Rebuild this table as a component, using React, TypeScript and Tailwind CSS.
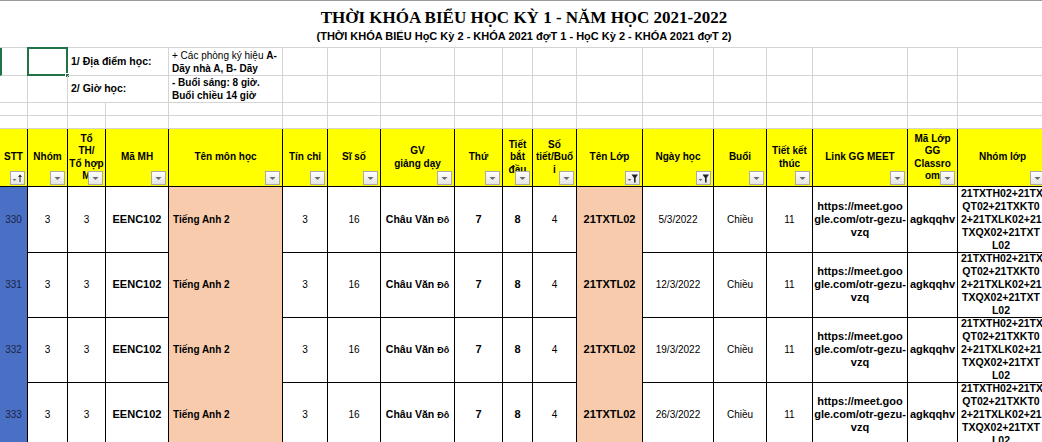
import React from "react"

const COLS =
  "grid grid-cols-[28px_40px_38px_63px_114px_45px_53px_74px_48px_30px_44px_66px_71px_53px_46px_95px_50px_90px]"

type BtnKind = "drop" | "sort" | "funnel"

function FilterBtn({ kind }: { kind: BtnKind }) {
  return (
    <div className="absolute right-[2px] bottom-[1px] w-[15px] h-[14px] border border-[#a9a9a9] bg-gradient-to-b from-white to-[#e4e4e4]">
      <svg width="13" height="12" viewBox="0 0 13 12" className="block">
        {kind === "drop" && <polygon points="3.5,5 9.5,5 6.5,8" fill="#6b6b6b" />}
        {kind === "sort" && (
          <>
            <polygon points="1.5,7 5.5,7 3.5,9" fill="#6b6b6b" />
            <line x1="9" y1="3" x2="9" y2="10" stroke="#333" strokeWidth="1" />
            <polygon points="7,5 11,5 9,2.5" fill="#333" />
          </>
        )}
        {kind === "funnel" && (
          <>
            <polygon points="1.5,7 5.5,7 3.5,9" fill="#6b6b6b" />
            <polygon points="5.5,2.5 12,2.5 9.6,6 9.6,10.5 8,10.5 8,6" fill="#222" />
          </>
        )}
      </svg>
    </div>
  )
}

const headers: { lines: string[]; btn: BtnKind }[] = [
  { lines: ["STT"], btn: "sort" },
  { lines: ["Nhóm"], btn: "drop" },
  { lines: ["Tổ", "TH/", "Tổ hợp", "M"], btn: "drop" },
  { lines: ["Mã MH"], btn: "drop" },
  { lines: ["Tên môn học"], btn: "drop" },
  { lines: ["Tín chỉ"], btn: "drop" },
  { lines: ["Sĩ số"], btn: "drop" },
  { lines: ["GV", "giảng dạy"], btn: "drop" },
  { lines: ["Thứ"], btn: "drop" },
  { lines: ["Tiết", "bắt", "đầu"], btn: "drop" },
  { lines: ["Số", "tiết/Buổ", "i"], btn: "drop" },
  { lines: ["Tên Lớp"], btn: "funnel" },
  { lines: ["Ngày học"], btn: "funnel" },
  { lines: ["Buổi"], btn: "drop" },
  { lines: ["Tiết kết", "thúc"], btn: "drop" },
  { lines: ["Link GG MEET"], btn: "drop" },
  { lines: ["Mã Lớp", "GG", "Classro", "om"], btn: "drop" },
  { lines: ["Nhóm lớp"], btn: "drop" },
]

const rows = [
  { stt: 330, date: "5/3/2022" },
  { stt: 331, date: "12/3/2022" },
  { stt: 332, date: "19/3/2022" },
  { stt: 333, date: "26/3/2022" },
]

function Cell({ className = "", children }: { className?: string; children?: React.ReactNode }) {
  return (
    <div className={`border-r border-b border-black flex items-center justify-center text-center ${className}`}>
      {children}
    </div>
  )
}

function Grey({ className = "", children }: { className?: string; children?: React.ReactNode }) {
  return <div className={`border-r border-b border-[#d4d4d4] relative ${className}`}>{children}</div>
}

export default function App() {
  return (
    <div
      className="w-[1042px] h-[442px] overflow-hidden bg-white text-black border-t border-[#9a9a9a]"
      style={{ fontFamily: '"Liberation Sans", Arial, sans-serif' }}
    >
      <div className="w-[1048px]">
        {/* title */}
        <div className="h-[47px] border-b border-[#d4d4d4] text-center">
          <div
            className="pt-[7px] text-[17px] leading-[20px] font-bold"
            style={{ fontFamily: '"Liberation Serif", "Times New Roman", serif' }}
          >
            THỜI KHÓA BIỂU HỌC KỲ 1 - NĂM HỌC 2021-2022
          </div>
          <div className="mt-[2px] text-[11px] leading-[13px] font-bold">
            (THỜI KHÓA BIỂU HọC Kỳ 2 - KHÓA 2021 đợT 1 - HọC Kỳ 2 - KHÓA 2021 đợT 2)
          </div>
        </div>

        {/* notes area */}
        <div className={`${COLS} grid-rows-[28px_27px_13px_13px] text-[10.5px]`}>
          <Grey className="border-l-2 border-l-[#217346]" />
          <Grey>
            <div className="absolute -left-[1px] -top-[1px] w-[41px] h-[29px] border-2 border-[#217346]" />
            <div className="absolute -right-[3px] -bottom-[3px] w-[5px] h-[5px] bg-[#217346] border border-white" />
          </Grey>
          <Grey className="col-span-2 flex items-center pl-[3px] font-bold">1/ Địa điểm học:</Grey>
          <Grey className="flex items-center pl-[3px] leading-[13px] whitespace-nowrap text-[10px]">
            <div>
              + Các phòng ký hiệu <b>A-</b>
              <br />
              <b>Dãy nhà A, B- Dãy</b>
            </div>
          </Grey>
          {Array.from({ length: 13 }).map((_, i) => (
            <Grey key={"a" + i} />
          ))}

          <Grey />
          <Grey />
          <Grey className="col-span-2 flex items-center pl-[3px] font-bold">2/ Giờ học:</Grey>
          <Grey className="flex items-center pl-[3px] leading-[13px] font-bold whitespace-nowrap text-[10px]">
            <div>
              - Buổi sáng: 8 giờ.
              <br />
              Buổi chiều 14 giờ
            </div>
          </Grey>
          {Array.from({ length: 13 }).map((_, i) => (
            <Grey key={"b" + i} />
          ))}

          {Array.from({ length: 36 }).map((_, i) => (
            <Grey key={"c" + i} />
          ))}
        </div>

        {/* header */}
        <div className={`${COLS} h-[58px] text-[10px] font-bold leading-[12.5px]`}>
          {headers.map((h, i) => (
            <div
              key={i}
              className="relative bg-[#ffff00] border-r border-b border-black flex flex-col items-center justify-center text-center whitespace-nowrap"
            >
              {h.lines.map((l, j) => (
                <span key={j}>{l}</span>
              ))}
              <FilterBtn kind={h.btn} />
            </div>
          ))}
        </div>

        {/* data */}
        {rows.map((r) => (
          <div key={r.stt} className={`${COLS} h-[65px] text-[10px] leading-[13px]`}>
            <Cell className="bg-[#4a70c6] text-[#1c2347]">{r.stt}</Cell>
            <Cell>3</Cell>
            <Cell>3</Cell>
            <Cell className="font-bold text-[11px]">EENC102</Cell>
            <Cell className="bg-[#f8cbad] font-bold text-[10px] !justify-start pl-[4px]">Tiếng Anh 2</Cell>
            <Cell>3</Cell>
            <Cell>16</Cell>
            <Cell className="font-bold text-[10.5px]">
              <span>
                Châu Văn <span className="text-[9px]">Đô</span>
              </span>
            </Cell>
            <Cell className="font-bold text-[11px]">7</Cell>
            <Cell className="font-bold text-[11px]">8</Cell>
            <Cell>4</Cell>
            <Cell className="bg-[#f8cbad] font-bold text-[11px]">21TXTL02</Cell>
            <Cell>{r.date}</Cell>
            <Cell>Chiều</Cell>
            <Cell>11</Cell>
            <Cell className="font-bold text-[11px]">
              <div>
                https://meet.goo
                <br />
                gle.com/otr-gezu-
                <br />
                vzq
              </div>
            </Cell>
            <Cell className="font-bold text-[11px]">agkqqhv</Cell>
            <Cell className="font-bold text-[10.5px] !justify-start pl-[3px]">
              <div className="text-center w-[80px] whitespace-nowrap">
                21TXTH02+21TX
                <br />
                QT02+21TXKT0
                <br />
                2+21TXLK02+21
                <br />
                TXQX02+21TXT
                <br />
                L02
              </div>
            </Cell>
          </div>
        ))}
      </div>
    </div>
  )
}
